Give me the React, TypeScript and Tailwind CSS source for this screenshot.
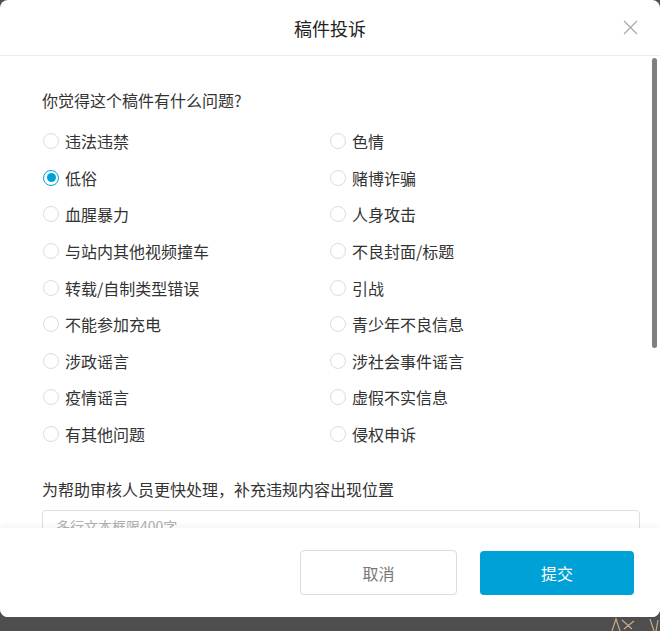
import React, { useState } from "react";

const left = ["违法违禁", "低俗", "血腥暴力", "与站内其他视频撞车", "转载/自制类型错误", "不能参加充电", "涉政谣言", "疫情谣言", "有其他问题"];
const right = ["色情", "赌博诈骗", "人身攻击", "不良封面/标题", "引战", "青少年不良信息", "涉社会事件谣言", "虚假不实信息", "侵权申诉"];

function Radio({ label, checked, onClick }: { label: string; checked: boolean; onClick: () => void }) {
  return (
    <div className="flex items-center h-[36.6px] cursor-pointer" onClick={onClick}>
      <span
        className={
          checked
            ? "ml-[1px] w-[16px] h-[16px] rounded-full border border-[#00a1d6] flex items-center justify-center"
            : "ml-[1px] w-[16px] h-[16px] rounded-full border border-[#dcdcdc] flex items-center justify-center"
        }
      >
        {checked && <span className="w-[9px] h-[9px] rounded-full bg-[#00a1d6]" />}
      </span>
      <span className="ml-[6px] text-[16px] leading-[22px] text-[#333]">{label}</span>
    </div>
  );
}

export default function App() {
  const [sel, setSel] = useState("低俗");
  const rows = left.map((l, i) => [l, right[i]]);
  return (
    <div
      className="relative h-[631px] w-[660px] overflow-hidden bg-[#4e4e4e]"
      style={{ fontFamily: '"Noto Sans CJK SC", "Noto Sans", sans-serif' }}
    >
      <div className="flex h-[617px] w-[660px] flex-col overflow-hidden rounded-[8px] bg-white">
        <div className="relative flex h-[56px] shrink-0 items-center justify-center border-b border-[#ececec]">
          <span className="text-[18px] leading-[24px] text-[#222]">稿件投诉</span>
          <svg className="absolute right-[22px] top-[20px]" width="15" height="15" viewBox="0 0 15 15">
            <path d="M1 1L14 14M14 1L1 14" stroke="#a8a8a8" strokeWidth="1.2" fill="none" />
          </svg>
        </div>
        <div className="relative flex-1 overflow-hidden">
          <div className="pl-[42px] pr-[20px] pt-[33px]">
            <div className="text-[16px] leading-[22px] text-[#333]">你觉得这个稿件有什么问题?</div>
            <div className="mt-[12px] grid grid-cols-[287px_1fr]">
              {rows.map(([l, r]) => (
                <React.Fragment key={l}>
                  <Radio label={l} checked={sel === l} onClick={() => setSel(l)} />
                  <Radio label={r} checked={sel === r} onClick={() => setSel(r)} />
                </React.Fragment>
              ))}
            </div>
            <div className="mt-[26px] text-[16px] leading-[22px] text-[#333]">为帮助审核人员更快处理，补充违规内容出现位置</div>
            <div className="mt-[10px] h-[100px] w-[598px] rounded-[4px] border border-[#dedede] px-[13px] pt-[2px]">
              <span className="text-[14px] leading-[20px] text-[#b0b0b0]">多行文本框限400字</span>
            </div>
          </div>
          <div className="absolute right-[3px] top-[2px] h-[290px] w-[5px] rounded-full bg-[#808080]" />
        </div>
        <div className="relative z-10 flex h-[89px] shrink-0 items-center justify-end gap-[23px] bg-white pr-[26px] shadow-[0_-2px_6px_rgba(0,0,0,0.05)]">
          <button className="h-[45px] w-[157px] rounded-[4px] border border-[#dcdcdc] bg-white text-[16px] text-[#777]">取消</button>
          <button className="h-[44px] w-[154px] rounded-[4px] bg-[#00a1d6] text-[16px] text-white">提交</button>
        </div>
      </div>
      <svg className="absolute bottom-0 right-0" width="50" height="14" viewBox="0 0 50 14">
        <path d="M2 14 L6 2 L10 14 M12 3 L22 12 M14 12 L24 4 M40 2 L44 14 M48 3 L46 14" stroke="#c9a98a" strokeWidth="1.2" fill="none" />
      </svg>
    </div>
  );
}
